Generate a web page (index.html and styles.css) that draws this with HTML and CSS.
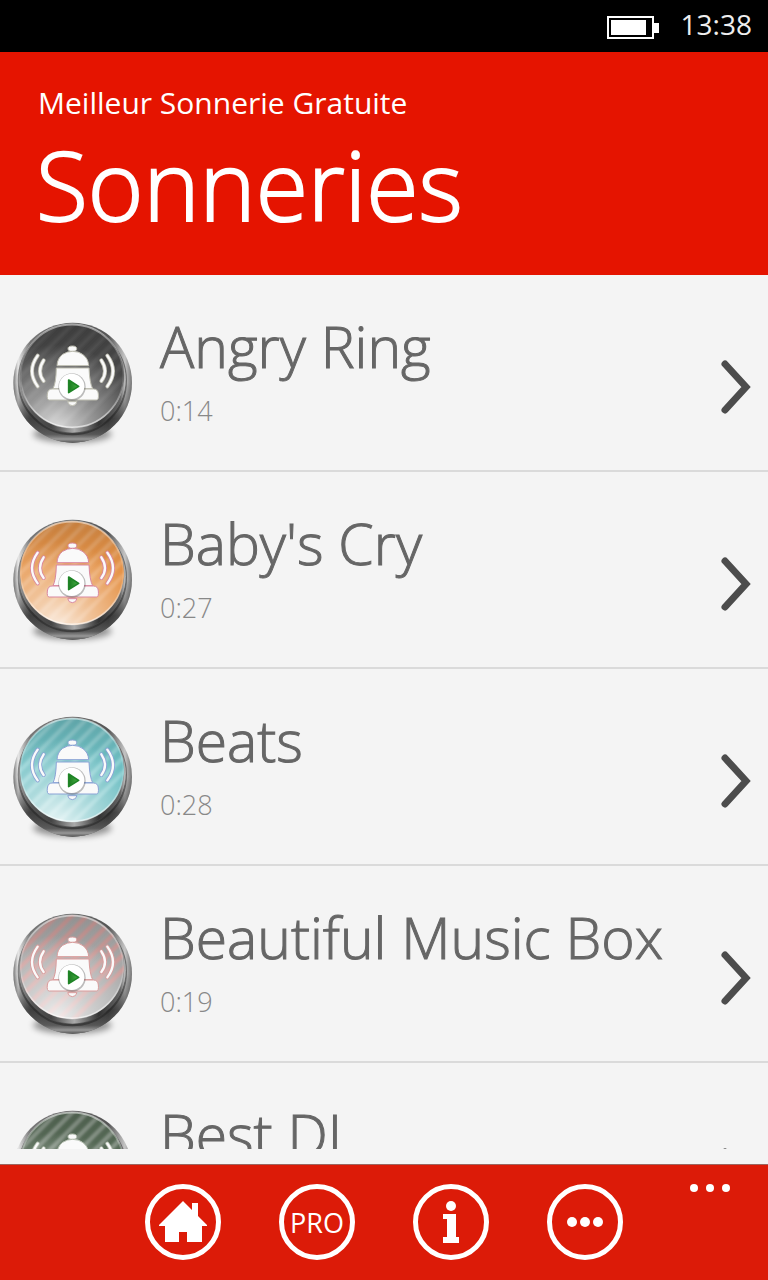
FILE: index.html
```
<!DOCTYPE html>
<html lang="fr">
<head>
<meta charset="UTF-8" />
<meta name="viewport" content="width=device-width, initial-scale=1" />
<title>Meilleur Sonnerie Gratuite</title>
<link rel="stylesheet" href="styles.css">
</head>
<body>

<!-- shared shapes -->
<svg class="defs" width="0" height="0" aria-hidden="true">
  <defs>
    <linearGradient id="base-metal" x1="0" y1="0" x2="1" y2="0">
      <stop offset="0" stop-color="#777"/>
      <stop offset="0.04" stop-color="#e8e8e8"/>
      <stop offset="0.14" stop-color="#777"/>
      <stop offset="0.5" stop-color="#666"/>
      <stop offset="0.8" stop-color="#555"/>
      <stop offset="0.94" stop-color="#c4c4c4"/>
      <stop offset="1" stop-color="#777"/>
    </linearGradient>
    <linearGradient id="base-shade" x1="0" y1="0" x2="0" y2="1">
      <stop offset="0.5" stop-color="#222" stop-opacity="0"/>
      <stop offset="0.8" stop-color="#222" stop-opacity="0.65"/>
      <stop offset="0.93" stop-color="#555" stop-opacity="0.8"/>
      <stop offset="0.97" stop-color="#999"/>
      <stop offset="1" stop-color="#555"/>
    </linearGradient>
    <linearGradient id="side-metal" x1="0" y1="0" x2="1" y2="0">
      <stop offset="0" stop-color="#999"/>
      <stop offset="0.12" stop-color="#555"/>
      <stop offset="0.3" stop-color="#444"/>
      <stop offset="0.52" stop-color="#aaa"/>
      <stop offset="0.75" stop-color="#333"/>
      <stop offset="0.95" stop-color="#666"/>
      <stop offset="1" stop-color="#ccc"/>
    </linearGradient>
    <linearGradient id="face-top" x1="0" y1="0" x2="0" y2="1">
      <stop offset="0" stop-color="#000" stop-opacity="0.14"/>
      <stop offset="0.45" stop-color="#000" stop-opacity="0"/>
    </linearGradient>
    <radialGradient id="face-glow" cx="0.35" cy="1" r="0.8">
      <stop offset="0" stop-color="#fff" stop-opacity="0.8"/>
      <stop offset="0.4" stop-color="#fff" stop-opacity="0.45"/>
      <stop offset="1" stop-color="#fff" stop-opacity="0"/>
    </radialGradient>
    <linearGradient id="rim" x1="0" y1="0" x2="0" y2="1">
      <stop offset="0" stop-color="#fff" stop-opacity="0.5"/>
      <stop offset="0.5" stop-color="#fff" stop-opacity="0.1"/>
      <stop offset="1" stop-color="#fff" stop-opacity="0.6"/>
    </linearGradient>
    <linearGradient id="play-green" x1="0" y1="0" x2="1" y2="0">
      <stop offset="0" stop-color="#1b7a20"/>
      <stop offset="1" stop-color="#45b043"/>
    </linearGradient>
    <filter id="soft" x="-20%" y="-50%" width="140%" height="200%">
      <feGaussianBlur stdDeviation="10"/>
    </filter>
    <filter id="stripe-soft">
      <feGaussianBlur stdDeviation="3"/>
    </filter>
    <clipPath id="face-clip"><circle cx="216" cy="198" r="156"/></clipPath>

    <symbol id="bell-button" viewBox="0 0 450 450">
      <ellipse cx="217" cy="372" rx="118" ry="26" fill="#000" opacity="0.4" filter="url(#soft)"/>
      <ellipse cx="218" cy="218" rx="178" ry="180" fill="url(#base-metal)"/>
      <ellipse cx="218" cy="218" rx="178" ry="180" fill="url(#base-shade)"/>
      <circle cx="217" cy="212" r="161" fill="none" stroke="#222" stroke-opacity="0.5" stroke-width="6"/>
      <circle cx="217" cy="208" r="160" fill="url(#side-metal)"/>
      <circle cx="216" cy="197" r="157" fill="#888"/>
      <g clip-path="url(#face-clip)">
        <circle class="face" cx="216" cy="198" r="156"/>
        <path class="stripes" filter="url(#stripe-soft)" d="M-40 300 L260 0 M-5 310 L295 10 M30 320 L330 20 M65 330 L365 30 M100 340 L400 40 M135 350 L435 50 M170 360 L470 60 M205 370 L505 70 M-75 290 L225 -10"/>
        <circle cx="216" cy="198" r="156" fill="url(#face-top)"/>
        <circle cx="216" cy="198" r="156" fill="url(#face-glow)"/>
      </g>
      <circle cx="216" cy="198" r="154" fill="none" stroke="url(#rim)" stroke-width="5"/>
      <g class="waves">
        <path class="edge" d="M113 137 Q79 184 113 229 M131 151 Q109 184 131 213 M304 151 Q326 184 304 213 M322 137 Q356 184 322 229"/>
        <path class="fill" d="M113 137 Q79 184 113 229 M131 151 Q109 184 131 213 M304 151 Q326 184 304 213 M322 137 Q356 184 322 229"/>
      </g>
      <g class="bell">
        <ellipse cx="217" cy="116" rx="13" ry="8"/>
        <path d="M171 167 Q172 145 188 133 Q202 124 218 124 Q236 124 249 134 Q265 146 266 167 Z"/>
        <path d="M169 174 H267 Q269 220 278 236 H159 Q168 220 169 174 Z"/>
        <path d="M156 237 H280 Q294 237 295 252 Q297 270 289 270 H148 Q140 270 142 252 Q144 237 156 237 Z"/>
        <path d="M203 275 H231 Q228 287 217 287 Q206 287 203 275 Z"/>
      </g>
      <circle cx="216" cy="231" r="41" fill="#000" opacity="0.25"/>
      <circle cx="215" cy="229" r="38" fill="#fff"/>
      <path d="M206 210 L236 229 L206 248 Z" fill="url(#play-green)" stroke="#1f8426" stroke-width="5" stroke-linejoin="round"/>
    </symbol>

    <symbol id="chevron" viewBox="0 0 32 56">
      <path d="M5 5 L26 28 L5 51" fill="none" stroke="#4c4c4c" stroke-width="7" stroke-linecap="round" stroke-linejoin="miter"/>
    </symbol>
  </defs>
</svg>

<div class="phone">
  <div class="status-bar">
    <svg class="battery" viewBox="0 0 52 23" role="img" aria-label="Batterie">
      <rect x="1" y="1" width="45" height="21" fill="none" stroke="#fff" stroke-width="2"/>
      <rect x="4" y="4" width="35" height="15" fill="#fff"/>
      <rect x="47" y="7" width="5" height="10" fill="#fff"/>
    </svg>
    <span class="clock">13:38</span>
  </div>

  <header class="page-header">
    <p class="app-name">Meilleur Sonnerie Gratuite</p>
    <h1>Sonneries</h1>
  </header>

  <main class="list-wrap">
    <ul class="ringtones">
      <li>
        <a href="#" class="ringtone dark">
          <svg class="ring-icon" aria-hidden="true"><use href="#bell-button"/></svg>
          <span class="info">
            <span class="title">Angry Ring</span>
            <span class="duration">0:14</span>
          </span>
          <svg class="chevron" aria-hidden="true"><use href="#chevron"/></svg>
        </a>
      </li>
      <li>
        <a href="#" class="ringtone orange">
          <svg class="ring-icon" aria-hidden="true"><use href="#bell-button"/></svg>
          <span class="info">
            <span class="title">Baby's Cry</span>
            <span class="duration">0:27</span>
          </span>
          <svg class="chevron" aria-hidden="true"><use href="#chevron"/></svg>
        </a>
      </li>
      <li>
        <a href="#" class="ringtone teal">
          <svg class="ring-icon" aria-hidden="true"><use href="#bell-button"/></svg>
          <span class="info">
            <span class="title">Beats</span>
            <span class="duration">0:28</span>
          </span>
          <svg class="chevron" aria-hidden="true"><use href="#chevron"/></svg>
        </a>
      </li>
      <li>
        <a href="#" class="ringtone rose">
          <svg class="ring-icon" aria-hidden="true"><use href="#bell-button"/></svg>
          <span class="info">
            <span class="title">Beautiful Music Box</span>
            <span class="duration">0:19</span>
          </span>
          <svg class="chevron" aria-hidden="true"><use href="#chevron"/></svg>
        </a>
      </li>
      <li>
        <a href="#" class="ringtone green">
          <svg class="ring-icon" aria-hidden="true"><use href="#bell-button"/></svg>
          <span class="info">
            <span class="title">Best DJ</span>
          </span>
          <svg class="chevron" aria-hidden="true"><use href="#chevron"/></svg>
        </a>
      </li>
    </ul>
  </main>

  <nav class="app-bar">
    <div class="app-buttons">
      <button type="button" class="round-btn" aria-label="Accueil">
        <svg viewBox="0 0 48 42" width="48" height="42">
          <path d="M24 0 L33 9 V2 H39 V15 L48 24 V25 H43 V41 H28 V31 H20 V41 H6 V25 H0 V24 Z" fill="#fff"/>
        </svg>
      </button>
      <button type="button" class="round-btn">PRO</button>
      <button type="button" class="round-btn" aria-label="Informations">
        <svg viewBox="0 0 16 42" width="16" height="42">
          <circle cx="8" cy="5" r="5" fill="#fff"/>
          <path d="M0 13 H13 V36 H16 V42 H0 V36 H4 V18 H0 Z" fill="#fff"/>
        </svg>
      </button>
      <button type="button" class="round-btn" aria-label="Plus">
        <svg viewBox="0 0 36 10" width="36" height="10" fill="#fff">
          <circle cx="5" cy="5" r="5"/>
          <circle cx="18" cy="5" r="5"/>
          <circle cx="31" cy="5" r="5"/>
        </svg>
      </button>
    </div>
    <button type="button" class="more-btn" aria-label="Ouvrir le menu">
      <svg viewBox="0 0 40 8" width="40" height="8" fill="#fff">
        <circle cx="4" cy="4" r="4"/>
        <circle cx="20" cy="4" r="4"/>
        <circle cx="36" cy="4" r="4"/>
      </svg>
    </button>
  </nav>
</div>

</body>
</html>
```

FILE: styles.css
```
* {
  box-sizing: border-box;
}
body {
  margin: 0;
  font-family: 'Open Sans', 'Noto Sans', sans-serif;
  background-color: #f4f4f4;
  color: #666;
}
.defs {
  position: absolute;
}
.phone {
  display: flex;
  flex-direction: column;
  height: 100vh;
}

/* status bar */
.status-bar {
  display: flex;
  justify-content: flex-end;
  align-items: center;
  gap: 22px;
  height: 52px;
  padding: 0 16px 4px;
  background-color: #000;
  color: #eee;
}
.battery {
  width: 52px;
  height: 23px;
  margin-top: 6px;
}
.clock {
  font-size: 28px;
  line-height: 40px;
}

/* header */
.page-header {
  padding: 30px 36px 31px;
  background-color: #e51400;
  color: #fff;
}
.app-name {
  margin: 0;
  padding-left: 2px;
  font-size: 30px;
  line-height: 42px;
}
h1 {
  margin: 0;
  font-size: 95px;
  font-weight: 300;
  line-height: 120px;
  -webkit-text-stroke: 2px #fff;
}

/* list */
.list-wrap {
  flex: 1;
  min-height: 0;
  margin-bottom: 15px;
  overflow: hidden;
}
.ringtones {
  margin: 0;
  padding: 0;
  list-style: none;
}
.ringtone {
  display: flex;
  align-items: flex-start;
  height: 197px;
  padding: 35px 16px 0 0;
  border-bottom: 2px solid #dadada;
  color: #666;
  text-decoration: none;
}
.ring-icon {
  flex: none;
  width: 150px;
  height: 150px;
}
.info {
  flex: 1;
  display: flex;
  flex-direction: column;
  padding-left: 10px;
  font-weight: 300;
  white-space: nowrap;
}
.title {
  font-size: 57px;
  line-height: 72px;
  -webkit-text-stroke: 1px #666;
}
.duration {
  font-size: 27px;
  line-height: 58px;
  color: #888;
}
.chevron {
  flex: none;
  width: 32px;
  height: 56px;
  margin-top: 49px;
}

/* bell button colours */
.face {
  fill: var(--face);
}
.stripes {
  fill: none;
  stroke: var(--stripe);
  stroke-width: 13;
}
.bell {
  fill: #fafafa;
  stroke: var(--line);
  stroke-width: 3;
}
.waves {
  fill: none;
  stroke-linecap: round;
}
.edge {
  stroke: var(--line);
  stroke-width: 12;
}
.fill {
  stroke: #fafafa;
  stroke-width: 7;
}
.dark {
  --face: #484848;
  --stripe: #545454;
  --line: #bdbdb0;
}
.orange {
  --face: #e59348;
  --stripe: #eaa566;
  --line: #d987a0;
}
.teal {
  --face: #6fbfc3;
  --stripe: #8fd0d3;
  --line: #8ba3d6;
}
.rose {
  --face: #a9a9a9;
  --stripe: #cf9c9a;
  --line: #d99c9c;
}
.green {
  --face: #5a6e5a;
  --stripe: #8c9a8c;
  --line: #b8c2b4;
}

/* app bar */
.app-bar {
  display: grid;
  grid-template-columns: 1fr auto 1fr;
  align-items: start;
  padding: 19px 38px 20px;
  border-top: 1px solid #9c6660;
  background-color: #dc1b08;
}
.app-buttons {
  grid-column: 2;
  display: flex;
  gap: 58px;
}
.round-btn {
  display: flex;
  justify-content: center;
  align-items: center;
  width: 76px;
  height: 76px;
  padding: 0;
  border: 5px solid #fff;
  border-radius: 50%;
  background: none;
  color: #fff;
  font-family: inherit;
  font-size: 27px;
  cursor: pointer;
}
.more-btn {
  display: flex;
  justify-self: end;
  padding: 0;
  border: none;
  background: none;
  cursor: pointer;
}
```
